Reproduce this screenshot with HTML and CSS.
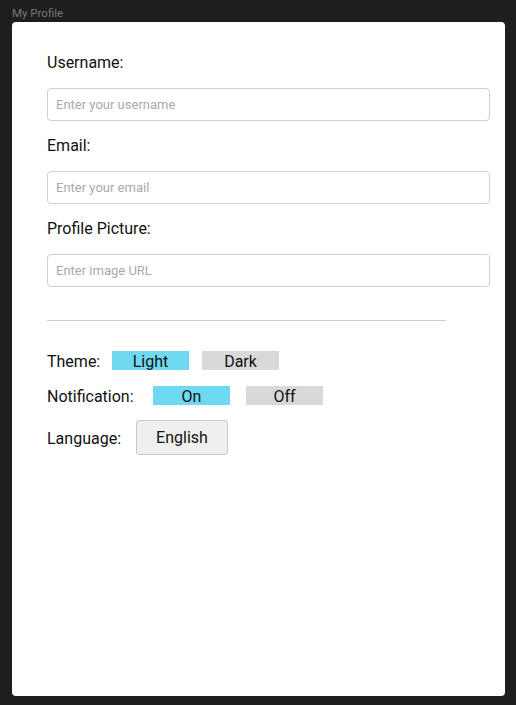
FILE: index.html
```html
<!DOCTYPE html>
<html>
<head>
<meta charset="utf-8">
<link rel="stylesheet" href="styles.css">
</head>
<body>
<div class="title">My Profile</div>
<div class="card">
  <label class="label">Username:</label>
  <input class="field" type="text" placeholder="Enter your username">
  <label class="label">Email:</label>
  <input class="field" type="text" placeholder="Enter your email">
  <label class="label">Profile Picture:</label>
  <input class="field" type="text" placeholder="Enter image URL">
  <div class="divider"></div>
  <div class="row row-theme">
    <span class="row-label">Theme:</span>
    <span class="opt opt-on">Light</span>
    <span class="opt">Dark</span>
  </div>
  <div class="row row-notif">
    <span class="row-label">Notification:</span>
    <span class="opt opt-on">On</span>
    <span class="opt">Off</span>
  </div>
  <div class="row row-lang">
    <span class="row-label">Language:</span>
    <button class="lang">English</button>
  </div>
</div>
</body>
</html>
```
FILE: styles.css
```css
html, body {
  margin: 0;
  padding: 0;
  background: #1e1e1e;
  font-family: Roboto, "Liberation Sans", sans-serif;
  height: 705px;
  overflow: hidden;
}
.title {
  height: 22px;
  padding-left: 12px;
  font-size: 11.5px;
  line-height: 26px;
  color: #777;
  box-sizing: border-box;
}
.card {
  margin-left: 12px;
  width: 493px;
  height: 674px;
  background: #fff;
  border-radius: 4px;
  box-sizing: border-box;
  padding: 31px 15px 0 35px;
  display: flex;
  flex-direction: column;
  align-items: flex-start;
}
.label {
  font-size: 16px;
  line-height: 19px;
  color: #111;
  margin-bottom: 16px;
}
.field {
  width: 443px;
  height: 33px;
  box-sizing: border-box;
  border: 1px solid #cfcfcf;
  border-radius: 4px;
  padding: 0 8px;
  font-family: Roboto, "Liberation Sans", sans-serif;
  font-size: 13px;
  margin: 0 0 15px 0;
  outline: none;
}
.field::placeholder {
  color: #aaa;
}
.divider {
  width: 399px;
  height: 1px;
  background: #cccccc;
  margin-top: 18px;
  margin-bottom: 30px;
}
.row {
  display: flex;
  align-items: flex-start;
  font-size: 16px;
  color: #111;
}
.row-theme, .row-notif {
  height: 19px;
  margin-bottom: 16px;
}
.row-notif {
  margin-bottom: 15px;
}
.opt {
  width: 77px;
  height: 19px;
  line-height: 21px;
  text-align: center;
  background: #d9d9d9;
  font-size: 16px;
  color: #111;
}
.opt-on {
  background: #6fd9f1;
}
.row-label { line-height: 21px; }
.row-theme .row-label { width: 65px; }
.row-theme .opt + .opt { margin-left: 13px; }
.row-notif .row-label { width: 106px; }
.row-notif .opt + .opt { margin-left: 16px; }
.row-lang { align-items: center; }
.row-lang .row-label { width: 89px; line-height: 19px; padding-top: 1px; }
.lang {
  width: 92px;
  height: 35px;
  box-sizing: border-box;
  background: #efefef;
  border: 1px solid #c9c9c9;
  border-radius: 3px;
  font-family: Roboto, "Liberation Sans", sans-serif;
  font-size: 16px;
  color: #111;
  padding: 0;
}
```
